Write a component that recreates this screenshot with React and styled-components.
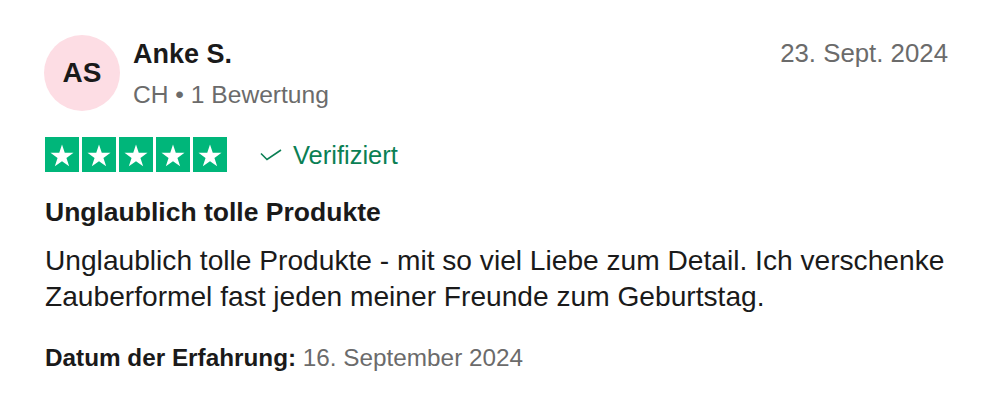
import React from "react";
import styled, { createGlobalStyle } from "styled-components";

const Global = createGlobalStyle`
  html, body { margin: 0; padding: 0; background: #fff; }
  body { font-family: "Liberation Sans", Arial, sans-serif; color: #1a1a1a; }
`;

const Card = styled.article`
  width: 1000px;
  height: 406px;
  box-sizing: border-box;
  padding: 35px 52px 0 44px;
  display: flex;
  flex-direction: column;
`;

const Header = styled.header`
  display: flex;
  align-items: flex-start;
  gap: 13px;
`;

const Avatar = styled.div`
  width: 76px;
  height: 76px;
  border-radius: 50%;
  background: #fddde4;
  display: flex;
  align-items: center;
  justify-content: center;
  font-weight: 700;
  font-size: 28px;
  color: #1a1a1a;
  flex-shrink: 0;
`;

const Who = styled.div`
  flex: 1;
  display: flex;
  flex-direction: column;
  gap: 10px;
  padding-top: 3px;
`;

const Name = styled.div`
  font-size: 27px;
  font-weight: 700;
  line-height: 32px;
`;

const Meta = styled.div`
  font-size: 24.6px;
  color: #6b6b6b;
  line-height: 30px;
`;

const DateText = styled.div`
  font-size: 25.8px;
  color: #6b6b6b;
  line-height: 30px;
  padding-top: 3px;
`;

const RatingRow = styled.div`
  display: flex;
  align-items: center;
  gap: 33px;
  margin-top: 26px;
  padding-left: 1px;
`;

const Stars = styled.div`
  display: flex;
  gap: 3px;
`;

const StarBox = styled.div`
  width: 34px;
  height: 35px;
  background: #00b67a;
  display: flex;
  align-items: center;
  justify-content: center;
  padding-top: 2px;
  box-sizing: border-box;
`;

const Verified = styled.div`
  display: flex;
  align-items: center;
  gap: 11px;
  font-size: 25.5px;
  color: #0b7f54;
  line-height: 30px;
`;

const Title = styled.h2`
  margin: 24px 0 0 1px;
  font-size: 26.5px;
  font-weight: 700;
  line-height: 32px;
`;

const Body = styled.p`
  margin: 15px 0 0 1px;
  font-size: 28.15px;
  line-height: 36px;
  color: #1a1a1a;
`;

const Experience = styled.p`
  margin: 28px 0 0 1px;
  font-size: 24.3px;
  line-height: 30px;
  color: #6b6b6b;
  & b { color: #1a1a1a; font-weight: 700; }
`;

const Star = () => (
  <svg width="24" height="23" viewBox="0 0 24 23">
    <path
      fill="#fff"
      d="M12 0.5l2.75 8.3h8.75l-7.05 5.15 2.7 8.35L12 17.15 4.85 22.3l2.7-8.35L0.5 8.8h8.75z"
    />
  </svg>
);

const Check = () => (
  <svg width="22" height="12" viewBox="0 0 22 12">
    <path d="M1 4.5l6 6L21 1" fill="none" stroke="#0b7f54" strokeWidth="1.6" />
  </svg>
);

export default function App() {
  return (
    <>
      <Global />
      <Card>
        <Header>
          <Avatar>AS</Avatar>
          <Who>
            <Name>Anke S.</Name>
            <Meta>CH • 1 Bewertung</Meta>
          </Who>
          <DateText>23. Sept. 2024</DateText>
        </Header>
        <RatingRow>
          <Stars>
            {[0, 1, 2, 3, 4].map((i) => (
              <StarBox key={i}>
                <Star />
              </StarBox>
            ))}
          </Stars>
          <Verified>
            <Check />
            Verifiziert
          </Verified>
        </RatingRow>
        <Title>Unglaublich tolle Produkte</Title>
        <Body>
          Unglaublich tolle Produkte - mit so viel Liebe zum Detail. Ich verschenke
          Zauberformel fast jeden meiner Freunde zum Geburtstag.
        </Body>
        <Experience>
          <b>Datum der Erfahrung:</b> 16. September 2024
        </Experience>
      </Card>
    </>
  );
}
